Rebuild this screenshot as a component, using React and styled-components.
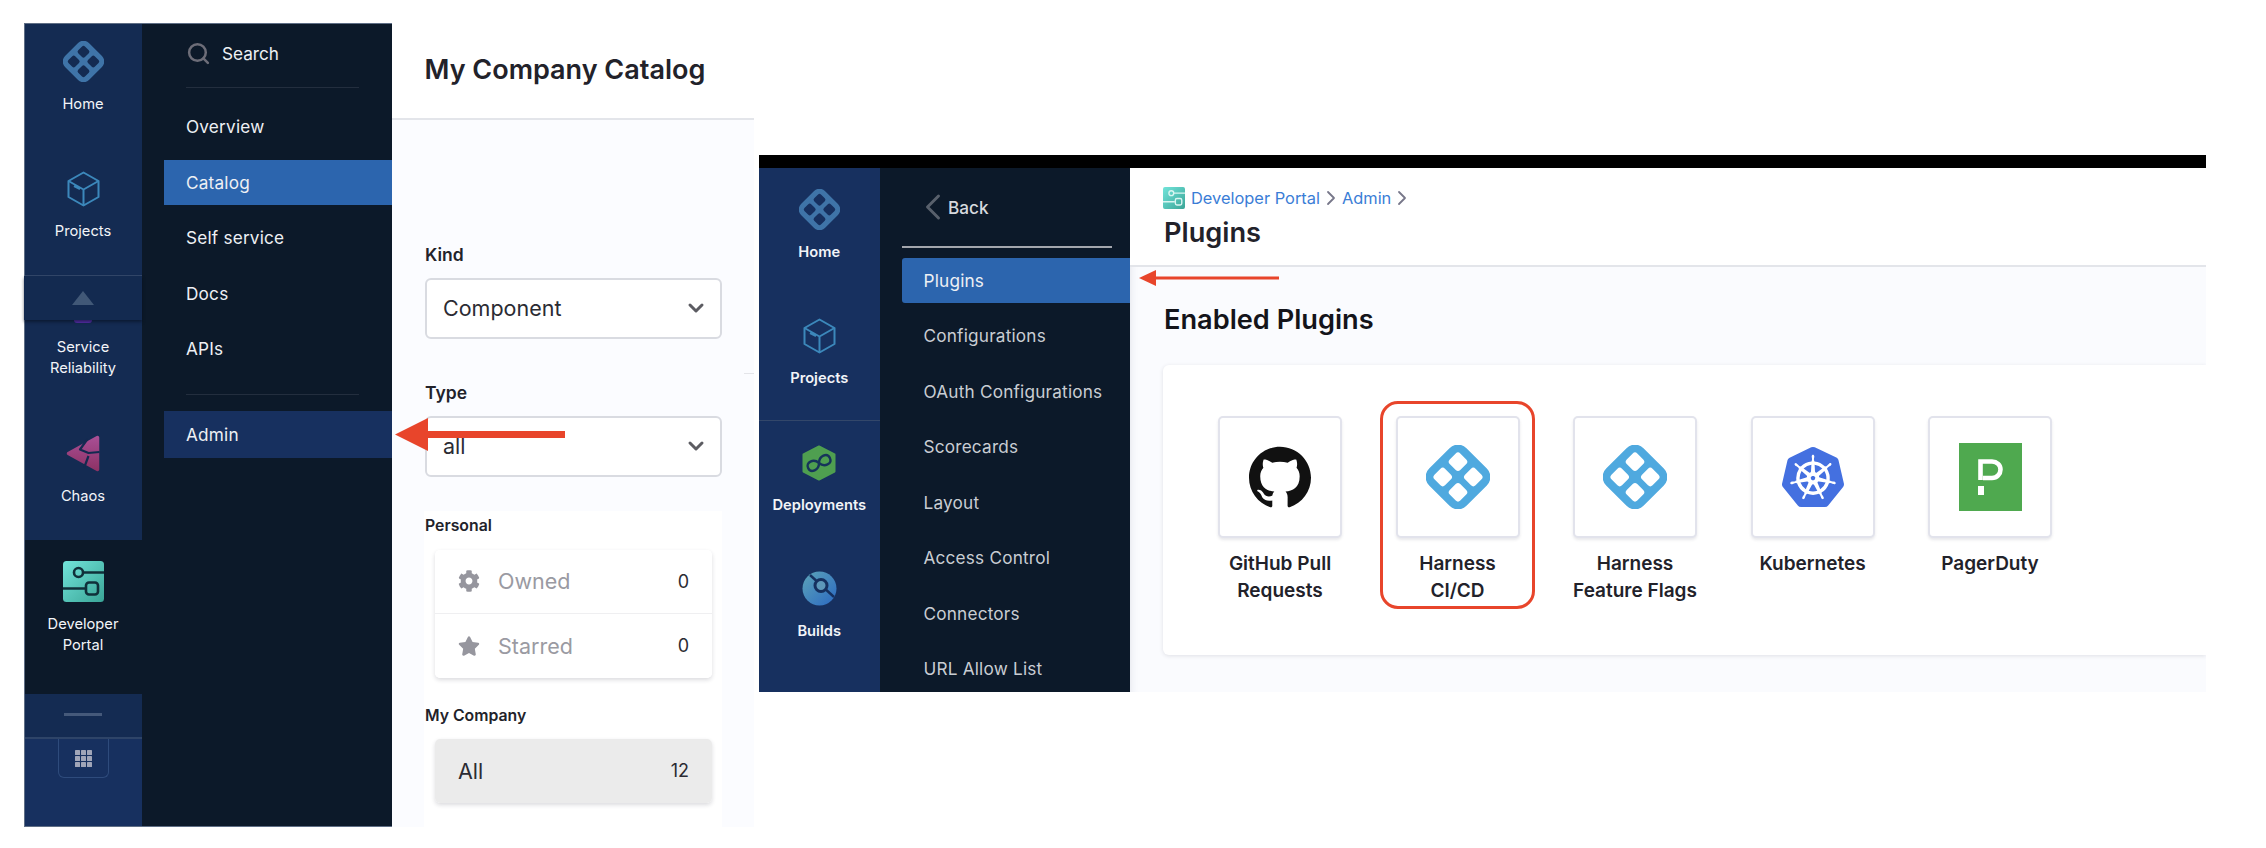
import React, { useId } from 'react';
import styled, { createGlobalStyle } from 'styled-components';
import { Search, ChevronDown, ChevronLeft, ChevronRight } from 'lucide-react';
import { FaCog, FaStar } from 'react-icons/fa';
import { SiGithub, SiKubernetes } from 'react-icons/si';

const GlobalStyle = createGlobalStyle`
  html, body {
    margin: 0;
    padding: 0;
    background: #fff;
    font-family: Inter, "Liberation Sans", sans-serif;
  }
  * { box-sizing: border-box; }
`;

const Page = styled.div`
  display: flex;
  align-items: flex-start;
  gap: 5px;
  width: 2266px;
  height: 848px;
  padding: 23px 0 0 24px;
  overflow: hidden;
`;

const Window = styled.div`
  position: relative;
  flex: none;
  display: flex;
  flex-direction: column;
  width: ${(p) => p.$width}px;
  height: ${(p) => p.$height}px;
  margin-top: ${(p) => p.$top || 0}px;
`;

const BlackBar = styled.div`
  flex: none;
  height: 13px;
  background: #000;
`;

const WindowBody = styled.div`
  flex: 1;
  min-height: 0;
  display: flex;
`;

const NavShell = styled.div`
  position: relative;
  flex: none;
  display: flex;
  &::after {
    content: '';
    position: absolute;
    inset: 0;
    border: 1px solid #5f6e85;
    border-right: 0;
    pointer-events: none;
    opacity: ${(p) => (p.$framed ? 1 : 0)};
  }
`;

const Rail = styled.div`
  width: ${(p) => p.$width}px;
  display: flex;
  flex-direction: column;
  background: #17305f;
  color: #fff;
`;

const RailItem = styled.div`
  flex: none;
  display: flex;
  flex-direction: column;
  align-items: center;
  height: ${(p) => p.$height}px;
  padding-top: ${(p) => p.$pad || 18}px;
  background: ${(p) => (p.$active ? '#0c1929' : p.$bg || 'transparent')};
  border-bottom: ${(p) => (p.$ruled ? '1px solid #33476a' : '0')};
`;

const RailIcon = styled.div`
  width: 41px;
  height: 41px;
  margin-bottom: 12px;
  display: flex;
  align-items: center;
  justify-content: center;
`;

const RailLabel = styled.div`
  font-size: 14.7px;
  line-height: 21px;
  font-weight: ${(p) => p.$weight || 400};
  text-align: center;
  color: #f2f4f8;
`;

const UpperRail = styled.div`
  display: flex;
  flex-direction: column;
  background: #142b52;
`;

const CollapsePanel = styled.div`
  position: relative;
  z-index: 1;
  flex: none;
  height: 44px;
  display: flex;
  align-items: center;
  justify-content: center;
  background: #132a50;
  box-shadow: 0 2px 3px rgba(5, 12, 26, 0.55);
`;

const UpTriangle = styled.div`
  width: 22px;
  height: 14px;
  background: #415877;
  clip-path: polygon(50% 0, 100% 100%, 0 100%);
`;

const PeekArc = styled.div`
  width: 18px;
  height: 3px;
  margin-bottom: 14px;
  border-radius: 0 0 9px 9px;
  background: #5a2fb0;
`;

const StackedItem = styled.div`
  flex: none;
  height: 96px;
  display: flex;
  flex-direction: column;
  align-items: center;
`;

const DashPanel = styled.div`
  flex: none;
  height: 45px;
  display: flex;
  align-items: center;
  justify-content: center;
  padding-bottom: 2px;
  background: #142b52;
  border-bottom: 2px solid #2e4468;
`;

const Dash = styled.div`
  width: 38px;
  height: 3px;
  background: #45597a;
`;

const GridButton = styled.div`
  align-self: center;
  width: 51px;
  height: 39px;
  display: flex;
  align-items: center;
  justify-content: center;
  border: 1px solid #2e4b7c;
  border-top: 0;
  border-radius: 0 0 6px 6px;
`;

const Sidebar = styled.div`
  width: ${(p) => p.$width}px;
  display: flex;
  flex-direction: column;
  background: #0c1929;
  color: #eef0f4;
`;

const SidebarTop = styled.div`
  flex: none;
  display: flex;
  align-items: center;
  height: ${(p) => p.$height}px;
  margin-left: ${(p) => p.$indent}px;
  padding-bottom: ${(p) => p.$lift}px;
  font-size: 17.2px;
`;

const SidebarRule = styled.div`
  flex: none;
  height: ${(p) => p.$thick || 1}px;
  width: ${(p) => p.$width}px;
  margin: ${(p) => p.$margin};
  background: ${(p) => p.$color};
`;

const SearchIcon = styled(Search)`
  width: 25px;
  height: 25px;
  margin-right: 11px;
  stroke-width: 2.4;
  color: #6d6d78;
`;

const BackIcon = styled(ChevronLeft)`
  width: 44px;
  height: 44px;
  margin-right: -7px;
  stroke-width: 1.6;
  color: #58606c;
`;

const BackText = styled.span`
  color: #d6d9de;
  font-weight: 500;
`;

const SideList = styled.div`
  display: flex;
  flex-direction: column;
  gap: 10.5px;
  margin-left: 22px;
  padding-top: ${(p) => p.$pad || 0}px;
`;

const SideItem = styled.div`
  flex: none;
  display: flex;
  align-items: center;
  height: ${(p) => p.$height || 45}px;
  padding: 0 0 1px 22px;
  font-size: 17.2px;
  letter-spacing: 0.2px;
  color: ${(p) => (p.$muted ? '#c9cdd3' : '#eef0f4')};
  background: ${(p) => p.$bg || 'transparent'};
  border-radius: ${(p) => (p.$rounded ? '3px 0 0 3px' : '0')};
`;

const CatalogMain = styled.div`
  position: relative;
  flex: 1;
  min-width: 0;
  display: flex;
  flex-direction: column;
  background: #fbfcff;
`;

const CatalogHeader = styled.div`
  flex: none;
  height: 97px;
  display: flex;
  align-items: center;
  padding: 0 0 2px 32.500px;
  background: #fff;
  border-bottom: 2px solid #e3e5ea;
`;

const CatalogTitle = styled.h1`
  margin: 0;
  font-size: 27px;
  font-weight: 600;
  color: #22222a;
`;

const Filters = styled.div`
  width: 297px;
  margin-left: 33px;
  padding-top: 125px;
  display: flex;
  flex-direction: column;
`;

const FieldLabel = styled.div`
  font-size: 17.5px;
  line-height: 20px;
  font-weight: 600;
  color: #22222a;
  margin: ${(p) => p.$margin};
`;

const SelectBox = styled.div`
  height: 61px;
  display: flex;
  align-items: center;
  justify-content: space-between;
  padding: 0 12px 1px 16px;
  background: #fff;
  border: 2px solid #d9dbe1;
  border-radius: 6px;
  font-size: 21.5px;
  color: #2b2b33;
`;

const SelectChevron = styled(ChevronDown)`
  width: 24px;
  height: 24px;
  stroke-width: 3;
  color: #5c5c62;
`;

const OwnerPanel = styled.div`
  margin: 34px 0 0 -1px;
  padding-bottom: 24px;
  background: #fff;
  display: flex;
  flex-direction: column;
`;

const OwnerHeading = styled.div`
  font-size: 15.8px;
  line-height: 20px;
  font-weight: 600;
  color: #22222a;
  padding-left: 1px;
  margin: ${(p) => p.$margin};
`;

const OwnerCard = styled.div`
  width: 277px;
  margin-left: 11px;
  border-radius: 5px;
  overflow: hidden;
  box-shadow: 0 2px 4px rgba(30, 30, 50, 0.16);
`;

const OwnerRow = styled.div`
  height: ${(p) => p.$height || 64}px;
  display: flex;
  align-items: center;
  padding: 0 23px 1px;
  font-size: 21.5px;
  background: ${(p) => (p.$selected ? '#ebebeb' : '#fff')};
  color: #2b2b33;
  border-bottom: ${(p) => (p.$ruled ? '1px solid #efeff1' : '0')};
`;

const OwnerIcon = styled.span`
  width: 40px;
  display: flex;
  color: #96969e;
  font-size: 22px;
`;

const OwnerName = styled.span`
  flex: 1;
  color: ${(p) => (p.$dim ? '#9a9aa2' : '#2b2b33')};
`;

const OwnerCount = styled.span`
  font-size: 18px;
  color: #2b2b33;
`;

const GutterTick = styled.div`
  position: absolute;
  top: 350px;
  right: 0;
  width: 10px;
  height: 1px;
  background: #e4e5e9;
`;

const ArrowMark = styled.svg`
  position: absolute;
  left: ${(p) => p.$left}px;
  top: ${(p) => p.$top}px;
  z-index: 3;
`;

const PluginMain = styled.div`
  position: relative;
  flex: 1;
  min-width: 0;
  display: flex;
  flex-direction: column;
  background: #fafbfe;
  box-shadow: inset 8px 0 8px -8px rgba(30, 40, 80, 0.12);
  overflow: hidden;
`;

const PluginHeader = styled.div`
  flex: none;
  height: 99px;
  padding: 19px 0 0 33px;
  background: #fff;
  border-bottom: 2px solid #e3e5ea;
`;

const Crumbs = styled.div`
  display: flex;
  align-items: center;
  height: 22px;
  font-size: 16.4px;
  color: #3a7dd6;
`;

const CrumbLogo = styled.span`
  display: flex;
  margin-right: 6px;
`;

const CrumbChevron = styled(ChevronRight)`
  width: 24px;
  height: 24px;
  margin: 0 -1px;
  stroke-width: 1.8;
  color: #77778a;
`;

const PluginTitle = styled.h2`
  margin: 7px 0 0 1px;
  font-size: 27.2px;
  line-height: 34px;
  font-weight: 600;
  color: #22222a;
`;

const SectionTitle = styled.h3`
  margin: 36px 0 28px 34px;
  font-size: 27.2px;
  line-height: 34px;
  font-weight: 600;
  color: #14141a;
`;

const PluginCard = styled.div`
  flex: none;
  height: 290px;
  margin-left: 33px;
  display: flex;
  align-items: flex-start;
  gap: 53.5px;
  padding: 51px 0 0 55px;
  background: #fff;
  border-radius: 6px 0 0 6px;
  box-shadow: 0 1px 4px rgba(30, 30, 60, 0.12);
`;

const PluginTile = styled.div`
  position: relative;
  flex: none;
  width: 124px;
  display: flex;
  flex-direction: column;
  align-items: center;
`;

const TileBox = styled.div`
  width: 124px;
  height: 122px;
  display: flex;
  align-items: center;
  justify-content: center;
  background: #fff;
  border: 2px solid #e2e3ec;
  border-radius: 5px;
  box-shadow: 0 2px 3px rgba(30, 30, 60, 0.1);
`;

const TileName = styled.div`
  margin-top: 12px;
  font-size: 19px;
  line-height: 27px;
  font-weight: 600;
  text-align: center;
  white-space: nowrap;
  color: #22222a;
`;

const HighlightBox = styled.div`
  position: absolute;
  top: -15px;
  left: -16px;
  width: 155px;
  height: 208px;
  border: 3px solid #e8452b;
  border-radius: 18px;
  pointer-events: none;
`;

const holeSpots = [
  [8.600, 8.600],
  [22.100, 8.600],
  [8.600, 22.100],
  [22.100, 22.100],
];

const HarnessLogo = ({ size = 41, color }) => {
  const maskId = `holes${useId().replace(/[^a-zA-Z0-9]/g, '')}`;
  return (
    <svg width={size} height={size} viewBox="0 0 40 40">
      <mask id={maskId}>
        <rect width="40" height="40" fill="#fff" />
        <g transform="rotate(45 20 20)">
          {holeSpots.map(([x, y]) => (
            <rect key={`${x}-${y}`} x={x} y={y} width="9.300" height="9.300" rx="2" fill="#000" />
          ))}
        </g>
      </mask>
      <g mask={`url(#${maskId})`}>
        <rect x="3.500" y="3.500" width="33" height="33" rx="7.500" fill={color} transform="rotate(45 20 20)" />
      </g>
    </svg>
  );
};

const CubeIcon = () => (
  <svg width="33" height="36" viewBox="0 0 33 36" fill="none" stroke="#3c88bb" strokeWidth="2" strokeLinejoin="round">
    <path d="M16.500 1.500 31.500 10v16l-15 8.500L1.500 26V10Z" />
    <path d="M1.500 10 16.500 18.500 31.500 10M16.500 18.500v16M7 15l6 3" />
  </svg>
);

const ChaosIcon = () => (
  <svg width="34" height="37" viewBox="0 0 34 37" fill="none">
    <defs>
      <linearGradient id="chaosFill" x1="0" y1="0" x2="0" y2="1">
        <stop offset="0" stopColor="#a84e94" />
        <stop offset="1" stopColor="#8e3366" />
      </linearGradient>
    </defs>
    <path d="M2.500 18.500 31.500 2.500v32Z" fill="url(#chaosFill)" stroke="url(#chaosFill)" strokeWidth="3.500" strokeLinejoin="round" />
    <path d="M21.500 4 14 14.500l8.500 3.500 11-1M22.500 21l-4.500 12" stroke="#132a50" strokeWidth="2.200" strokeLinejoin="round" />
  </svg>
);

const PortalIcon = ({ size = 41, line = '#10303a', id = 'portalFill' }) => (
  <svg width={size} height={size} viewBox="0 0 41 41" fill="none">
    <defs>
      <linearGradient id={id} x1="0" y1="0" x2="1" y2="1">
        <stop offset="0" stopColor="#72e4da" />
        <stop offset="1" stopColor="#3aa597" />
      </linearGradient>
    </defs>
    <rect width="41" height="41" rx="3.500" fill={`url(#${id})`} />
    <g stroke={line} strokeWidth="2.600">
      <path d="M20 11.500h21M0 27.500h22" />
      <circle cx="15.500" cy="11.500" r="4.500" />
      <rect x="23" y="21.500" width="12" height="12" rx="3" />
    </g>
  </svg>
);

const DeployIcon = () => (
  <svg width="34" height="36" viewBox="0 0 34 36" fill="none">
    <path d="M17 1.500 32.500 9.500v17L17 34.500 1.500 26.500v-17Z" fill="#4f9f50" stroke="#4f9f50" strokeWidth="2" strokeLinejoin="round" />
    <path d="M17 18C14 11.500 5 11.500 5 18S14 24.500 17 18 29 11.500 29 18 20 24.500 17 18Z" transform="rotate(-25 17 18)" stroke="#16345a" strokeWidth="2.400" />
  </svg>
);

const BuildIcon = () => (
  <svg width="35" height="35" viewBox="0 0 35 35" fill="none">
    <defs>
      <linearGradient id="buildFill" x1="0" y1="0" x2="1" y2="1">
        <stop offset="0" stopColor="#5da4b8" />
        <stop offset="1" stopColor="#2b69c2" />
      </linearGradient>
    </defs>
    <circle cx="17.500" cy="17.500" r="17" fill="url(#buildFill)" />
    <path d="M8 4 32 26" stroke="#16305f" strokeWidth="2.400" />
    <circle cx="19" cy="14.500" r="6" fill="#5d97b9" stroke="#16305f" strokeWidth="3" />
  </svg>
);

const GridIcon = () => (
  <svg width="17" height="17" viewBox="0 0 17 17" fill="#a0a5b8">
    {[0, 6, 12].map((y) =>
      [0, 6, 12].map((x) => <rect key={`${x}-${y}`} x={x} y={y} width="5" height="5" rx="0.600" />)
    )}
  </svg>
);

const PagerDutyLogo = () => (
  <svg width="63" height="68" viewBox="0 0 63 68" fill="none">
    <rect width="63" height="68" fill="#4fa94f" />
    <path d="M21.500 37V18.500H33C38 18.500 41.500 22 41.500 26.500S38 35 33 35H24" stroke="#fff" strokeWidth="4.600" />
    <rect x="19" y="43" width="6" height="9" fill="#fff" />
  </svg>
);

const RedArrow = ({ left, top, width, height, head, thick, arrowColor = '#e8452b' }) => (
  <ArrowMark $left={left} $top={top} width={width} height={height} viewBox={`0 0 ${width} ${height}`}>
    <path d={`M0 ${height / 2} ${head} 0V${height}Z`} fill={arrowColor} />
    <rect x={head} y={(height - thick) / 2} width={width - head} height={thick} fill={arrowColor} />
  </ArrowMark>
);

const catalogLinks = [
  { name: 'Overview' },
  { name: 'Catalog', bg: '#2c65ae' },
  { name: 'Self service' },
  { name: 'Docs' },
  { name: 'APIs' },
];

const adminLinks = [
  'Configurations',
  'OAuth Configurations',
  'Scorecards',
  'Layout',
  'Access Control',
  'Connectors',
  'URL Allow List',
];

const plugins = [
  { lines: ['GitHub Pull', 'Requests'], logo: <SiGithub size={62} color="#111" /> },
  { lines: ['Harness', 'CI/CD'], logo: <HarnessLogo size={64} color="#4fa9df" />, marked: true },
  { lines: ['Harness', 'Feature Flags'], logo: <HarnessLogo size={64} color="#4fa9df" /> },
  { lines: ['Kubernetes'], logo: <SiKubernetes size={62} color="#4470e0" /> },
  { lines: ['PagerDuty'], logo: <PagerDutyLogo /> },
];

const CatalogWindow = () => (
  <Window $width={730} $height={804}>
    <WindowBody>
      <NavShell $framed>
        <Rail $width={118}>
          <UpperRail>
            <RailItem $height={127}>
              <RailIcon><HarnessLogo color="#3f74a8" /></RailIcon>
              <RailLabel>Home</RailLabel>
            </RailItem>
            <RailItem $height={126} $ruled>
              <RailIcon><CubeIcon /></RailIcon>
              <RailLabel>Projects</RailLabel>
            </RailItem>
            <CollapsePanel><UpTriangle /></CollapsePanel>
            <StackedItem>
              <PeekArc />
              <RailLabel>Service<br />Reliability</RailLabel>
            </StackedItem>
            <RailItem $height={124} $pad={17}>
              <RailIcon><ChaosIcon /></RailIcon>
              <RailLabel>Chaos</RailLabel>
            </RailItem>
            <RailItem $height={154} $pad={21} $active>
              <RailIcon><PortalIcon /></RailIcon>
              <RailLabel>Developer<br />Portal</RailLabel>
            </RailItem>
            <DashPanel><Dash /></DashPanel>
          </UpperRail>
          <GridButton><GridIcon /></GridButton>
        </Rail>
        <Sidebar $width={250}>
          <SidebarTop $height={64} $indent={44} $lift={4}>
            <SearchIcon />
            Search
          </SidebarTop>
          <SidebarRule $width={173} $margin="0 0 0 44px" $color="#232e3e" />
          <SideList $pad={16.5}>
            {catalogLinks.map((link) => (
              <SideItem key={link.name} $bg={link.bg}>{link.name}</SideItem>
            ))}
          </SideList>
          <SidebarRule $width={173} $margin="22.5px 0 16px 44px" $color="#232e3e" />
          <SideList>
            <SideItem $height={47} $bg="#17305f">Admin</SideItem>
          </SideList>
        </Sidebar>
      </NavShell>
      <CatalogMain>
        <CatalogHeader>
          <CatalogTitle>My Company Catalog</CatalogTitle>
        </CatalogHeader>
        <Filters>
          <FieldLabel $margin="0 0 13px">Kind</FieldLabel>
          <SelectBox>Component<SelectChevron /></SelectBox>
          <FieldLabel $margin="44px 0 13px">Type</FieldLabel>
          <SelectBox>all<SelectChevron /></SelectBox>
          <OwnerPanel>
            <OwnerHeading $margin="5px 0 14px">Personal</OwnerHeading>
            <OwnerCard>
              <OwnerRow $ruled>
                <OwnerIcon><FaCog /></OwnerIcon>
                <OwnerName $dim>Owned</OwnerName>
                <OwnerCount>0</OwnerCount>
              </OwnerRow>
              <OwnerRow>
                <OwnerIcon><FaStar /></OwnerIcon>
                <OwnerName $dim>Starred</OwnerName>
                <OwnerCount>0</OwnerCount>
              </OwnerRow>
            </OwnerCard>
            <OwnerHeading $margin="28px 0 13px">My Company</OwnerHeading>
            <OwnerCard>
              <OwnerRow $selected>
                <OwnerName>All</OwnerName>
                <OwnerCount>12</OwnerCount>
              </OwnerRow>
            </OwnerCard>
          </OwnerPanel>
        </Filters>
        <GutterTick />
        <RedArrow left={3} top={395} width={170} height={33} head={33} thick={7} />
      </CatalogMain>
    </WindowBody>
  </Window>
);

const PluginsWindow = () => (
  <Window $width={1447} $height={537} $top={132}>
    <BlackBar />
    <WindowBody>
      <NavShell>
        <Rail $width={120.5}>
          <RailItem $height={126} $pad={21}>
            <RailIcon><HarnessLogo color="#3f74a8" /></RailIcon>
            <RailLabel $weight={600}>Home</RailLabel>
          </RailItem>
          <RailItem $height={127} $pad={21} $ruled>
            <RailIcon><CubeIcon /></RailIcon>
            <RailLabel $weight={600}>Projects</RailLabel>
          </RailItem>
          <RailItem $height={126} $pad={21}>
            <RailIcon><DeployIcon /></RailIcon>
            <RailLabel $weight={600}>Deployments</RailLabel>
          </RailItem>
          <RailItem $height={126} $pad={21}>
            <RailIcon><BuildIcon /></RailIcon>
            <RailLabel $weight={600}>Builds</RailLabel>
          </RailItem>
        </Rail>
        <Sidebar $width={250.5}>
          <SidebarTop $height={78} $indent={31.5} $lift={0}>
            <BackIcon />
            <BackText>Back</BackText>
          </SidebarTop>
          <SidebarRule $width={210} $thick={2} $margin="0 0 10px 22px" $color="#a3a6ad" />
          <SideList>
            <SideItem $bg="#2c65ae" $rounded>Plugins</SideItem>
            {adminLinks.map((name) => (
              <SideItem key={name} $muted>{name}</SideItem>
            ))}
          </SideList>
        </Sidebar>
      </NavShell>
      <PluginMain>
        <PluginHeader>
          <Crumbs>
            <CrumbLogo><PortalIcon size={22} line="#d9f5f1" id="crumbFill" /></CrumbLogo>
            Developer Portal
            <CrumbChevron />
            Admin
            <CrumbChevron />
          </Crumbs>
          <PluginTitle>Plugins</PluginTitle>
        </PluginHeader>
        <SectionTitle>Enabled Plugins</SectionTitle>
        <PluginCard>
          {plugins.map((plugin) => (
            <PluginTile key={plugin.lines.join(' ')}>
              <TileBox>{plugin.logo}</TileBox>
              <TileName>
                {plugin.lines.map((line) => <div key={line}>{line}</div>)}
              </TileName>
              {plugin.marked && <HighlightBox />}
            </PluginTile>
          ))}
        </PluginCard>
        <RedArrow left={9} top={102} width={140} height={16} head={17} thick={3} />
      </PluginMain>
    </WindowBody>
  </Window>
);

const App = () => (
  <>
    <GlobalStyle />
    <Page>
      <CatalogWindow />
      <PluginsWindow />
    </Page>
  </>
);

export default App;
